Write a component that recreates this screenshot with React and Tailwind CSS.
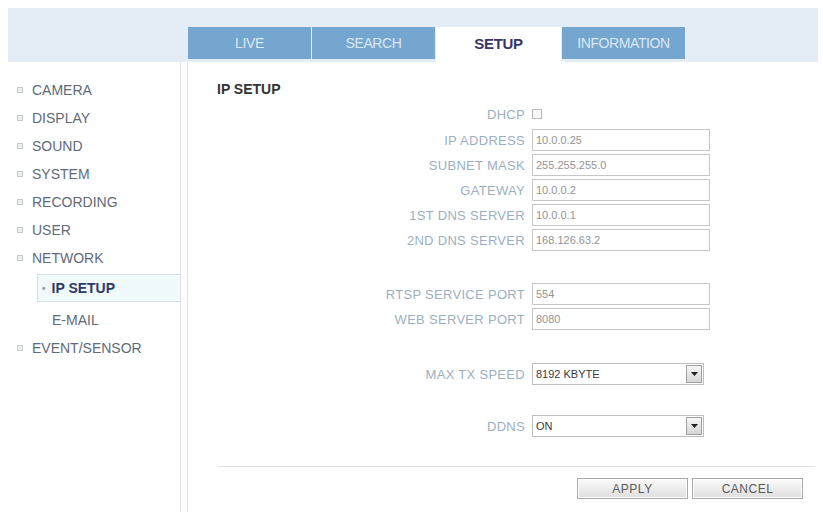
import React from 'react';

const menu = ['CAMERA', 'DISPLAY', 'SOUND', 'SYSTEM', 'RECORDING', 'USER', 'NETWORK'];

const Bullet = () => (
    <span className="inline-block w-[6px] h-[6px] mr-[9px] border border-[#c6ccd3] bg-[#eceff2]" />
);

const Row = ({ label, children, className }) => (
    <div className={`flex items-center h-[22px] ${className || ''}`}>
        <span className="w-[344px] pr-[7px] text-right text-[13px] leading-none tracking-[0.3px] text-[#9cafc2]">{label}</span>
        {children}
    </div>
);

const Field = ({ value }) => (
    <div className="w-[178px] h-[22px] flex items-center pl-[3px] border border-[#c6c6c6] bg-white text-[11px] text-[#949494]">
        {value}
    </div>
);

const Select = ({ value }) => (
    <div className="w-[172px] h-[22px] flex items-center justify-between pl-[3px] pr-[1px] border border-[#bdbdbd] bg-white">
        <span className="text-[11px] text-[#3a3a3a]">{value}</span>
        <span className="w-[16px] h-[18px] flex items-center justify-center border border-[#a0a0a0] bg-gradient-to-b from-[#f6f6f6] to-[#d6d6d6]">
            <svg width="7" height="4" viewBox="0 0 7 4">
                <path d="M0 0 H7 L3.5 4 Z" fill="#222" />
            </svg>
        </span>
    </div>
);

const Button = ({ children }) => (
    <button className="w-[111px] h-[21px] border border-[#a9a9a9] bg-gradient-to-b from-[#fbfbfb] to-[#dedede] text-[12px] tracking-[0.5px] text-[#5a5a5a] shadow-[inset_0_0_0_1px_#ffffff]">
        {children}
    </button>
);

const App = () => {
    const tabs = ['LIVE', 'SEARCH', 'SETUP', 'INFORMATION'];

    return (
        <div className="w-[823px] h-[512px] bg-white pt-[8px] font-['Liberation_Sans',Arial,sans-serif] overflow-hidden">
            {/* top tab bar */}
            <div className="ml-[8px] w-[810px] h-[54px] bg-[#e4edf5] flex items-end pl-[180px] gap-[1px]">
                {tabs.map((t) =>
                    t === 'SETUP' ? (
                        <div key={t} className="w-[125px] h-[35px] bg-white flex items-center justify-center text-[15px] font-bold text-[#3a3767] tracking-[-0.3px]">
                            {t}
                        </div>
                    ) : (
                        <div key={t} className="w-[123px] h-[32px] mb-[3px] bg-[#74a6cf] flex items-center justify-center text-[14px] text-[#dae8f3] tracking-[-0.4px]">
                            {t}
                        </div>
                    )
                )}
            </div>

            <div className="flex h-[450px]">
                {/* side menu */}
                <div className="w-[181px] border-r border-[#dfe4ea] pt-[14px]">
                    {menu.map((m) => (
                        <div key={m} className="h-[28px] flex items-center pl-[17px] text-[14px] text-[#616a78]">
                            <Bullet />
                            {m}
                        </div>
                    ))}
                    <div className="mt-[2px] ml-[37px] h-[28px] flex items-center pl-[4px] border border-r-0 border-[#d2e2ec] bg-[#f0f9fc] text-[14px] font-bold text-[#2f3966]">
                        <span className="text-[10px] text-[#8aa0b6] mr-[6px]">•</span>
                        IP SETUP
                    </div>
                    <div className="mt-[4px] h-[28px] flex items-center pl-[52px] text-[14px] text-[#616a78]">E-MAIL</div>
                    <div className="h-[28px] flex items-center pl-[17px] text-[14px] text-[#616a78]">
                        <Bullet />
                        EVENT/SENSOR
                    </div>
                </div>

                {/* settings */}
                <div className="flex-1 ml-[6px] border-l border-[#dfe4ea] flex flex-col">
                    <div className="mt-[19px] h-[16px] pl-[29px] text-[14px] font-bold text-[#333] leading-[16px]">IP SETUP</div>

                    <Row label="DHCP" className="mt-[6px]">
                        <span className="w-[10px] h-[10px] border border-[#bcbcbc] bg-[#f7f7f7]" />
                    </Row>
                    <div className="flex flex-col gap-[3px] mt-[4px]">
                        <Row label="IP ADDRESS"><Field value="10.0.0.25" /></Row>
                        <Row label="SUBNET MASK"><Field value="255.255.255.0" /></Row>
                        <Row label="GATEWAY"><Field value="10.0.0.2" /></Row>
                        <Row label="1ST DNS SERVER"><Field value="10.0.0.1" /></Row>
                        <Row label="2ND DNS SERVER"><Field value="168.126.63.2" /></Row>
                    </div>

                    <div className="flex flex-col gap-[3px] mt-[32px]">
                        <Row label="RTSP SERVICE PORT"><Field value="554" /></Row>
                        <Row label="WEB SERVER PORT"><Field value="8080" /></Row>
                    </div>

                    <Row label="MAX TX SPEED" className="mt-[33px]"><Select value="8192 KBYTE" /></Row>
                    <Row label="DDNS" className="mt-[30px]"><Select value="ON" /></Row>

                    <div className="mt-[29px] ml-[30px] mr-[8px] border-t border-[#e2e2e2]" />

                    <div className="mt-[11px] flex justify-end gap-[4px] pr-[20px]">
                        <Button>APPLY</Button>
                        <Button>CANCEL</Button>
                    </div>
                </div>
            </div>
        </div>
    );
};

export default App;
